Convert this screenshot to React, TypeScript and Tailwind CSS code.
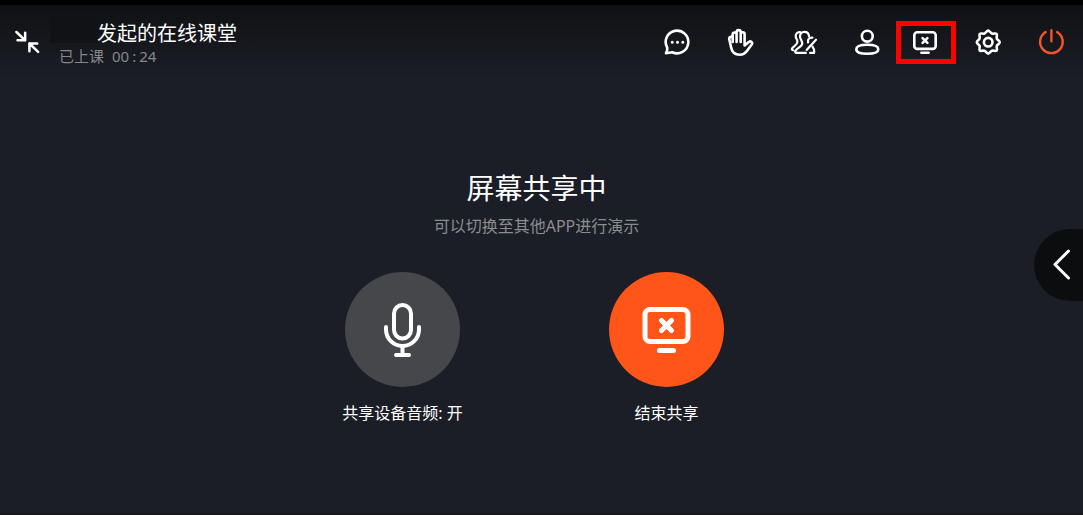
import type { ReactNode } from "react";

function Icon({ children, className = "size-7" }: { children: ReactNode; className?: string }) {
  return (
    <svg
      viewBox="0 0 28 28"
      fill="none"
      stroke="currentColor"
      strokeWidth={2.6}
      strokeLinecap="round"
      strokeLinejoin="round"
      className={className}
      aria-hidden="true"
    >
      {children}
    </svg>
  );
}

function ToolButton({ label, children }: { label: string; children: ReactNode }) {
  return (
    <button type="button" aria-label={label} className="block size-7">
      <Icon>{children}</Icon>
    </button>
  );
}

function Toolbar() {
  return (
    <nav className="flex items-center gap-[35px] pt-[23px]">
      <ToolButton label="聊天">
        <path d="M3.2 19.6A11.3 11.3 0 1 1 8.2 24.2L2 25.2Q3.6 22.6 3.2 19.600Z" />
        <path d="M8.2 14.2h.01M13.5 14.2h.01M18.8 14.2h.01" strokeWidth={3} />
      </ToolButton>
      <ToolButton label="举手">
        <path d="M5.7 14V6.4a1.9 1.9 0 0 1 3.9 0V14M9.6 6V4.2a2 2 0 0 1 4.1 0V14M13.7 6.2a1.9 1.9 0 0 1 3.9 0v11.2l4.2-3.4c2-1.5 4.2.5 2.9 2.5l-5 6.8c-1.8 2.4-3.8 3.4-6.9 3.4-5.3 0-8-2.8-8.7-7.4L2.2 11c-.2-2.4 3.3-3 3.5-.8" />
      </ToolButton>
      <ToolButton label="分组">
        <g strokeWidth={2.2}>
          <path d="M10.2 4.2C7 3.8 5.3 6.2 5.8 9c.3 1.7 1.5 2.6 1.6 4.4.1 3.3-3.2 4.5-5 6.5-.9 1-.5 2 .7 2.3" />
          <path d="M19 8.2c-.6-5.8-9-5.6-9 .2 0 2.7 2.2 4.2 2.2 7.2 0 3.3-4.7 4-6.7 7-.7 1.2-.2 2.3 1 2.3h9.3" />
          <path d="M22.4 9.7c-3.2-.4-5 1.8-4.3 4.8M26 11.7L16.6 22M22.6 18.7c.2 1.5 1.5 1.9 1.5 3.3v2.9h-4" />
        </g>
      </ToolButton>
      <ToolButton label="成员">
        <circle cx="14.3" cy="8.2" r="5.4" />
        <path d="M14.3 16.8c7.3 0 11 1.3 11 4.5s-3.7 4.5-11 4.5-11-1.3-11-4.5 3.7-4.5 11-4.5Z" />
      </ToolButton>
      <div className="relative -ml-[5px]">
        <ToolButton label="共享屏幕">
          <rect x="3.3" y="4.2" width="21.4" height="16.7" rx="3" />
          <path d="M11.6 10.1l4.8 4.8M16.4 10.1l-4.8 4.8M10.4 24.8h7.2" />
        </ToolButton>
        <span className="pointer-events-none absolute -top-[7px] -right-[17px] -bottom-2 -left-[15px] border-[5px] border-[#ff0000]" />
      </div>
      <ToolButton label="设置">
        <path d="M14.2 2.6c1.5 0 2.2 2.3 3.7 2.9 1.5.7 3.6-.7 4.7.4s-.4 3.2.2 4.7c.7 1.5 2.9 2.1 2.9 3.6s-2.2 2.2-2.9 3.7c-.6 1.5.9 3.6-.2 4.7s-3.2-.5-4.7.2c-1.5.6-2.2 2.8-3.7 2.8s-2.2-2.2-3.7-2.8c-1.5-.7-3.6.9-4.7-.2s.5-3.2-.2-4.7c-.6-1.5-2.8-2.2-2.8-3.7s2.2-2.1 2.8-3.6c.7-1.5-.9-3.6.2-4.7s3.2.3 4.7-.4c1.5-.6 2.2-2.9 3.7-2.9Z" />
        <circle cx="14.2" cy="14.2" r="4.3" />
      </ToolButton>
      <div className="text-[#f0562a]">
        <ToolButton label="下课">
          <path d="M8.6 4.1a11.3 11.3 0 1 0 11.6 0M14.4 2.2v11" strokeWidth={2.4} />
        </ToolButton>
      </div>
    </nav>
  );
}

function Header() {
  return (
    <header className="flex h-[75px] items-start justify-between bg-linear-to-b from-[#101114] to-[#1b1e26] pr-[18px]">
      <div className="flex items-start">
        <button type="button" aria-label="收起" className="mt-6 ml-[14px] block">
          <Icon className="size-[26px]">
            <path d="M2.6 3.2l9.4 9M12 4v8.2H3.8M26 24.6l-9.4-9M16.6 24v-8.4H25" strokeWidth={2.7} />
          </Icon>
        </button>
        <div className="ml-[10px] pt-3">
          <div className="flex h-[30px] items-start">
            <span className="h-[26px] w-[47px] bg-[#101215]" />
            <h1 className="pt-[2px] text-xl leading-[30px]">发起的在线课堂</h1>
          </div>
          <p className="ml-[9px] text-[15px] leading-[18px] text-[#85878b]">
            已上课<span className="ml-2">00</span>
            <span className="mx-[3px]">:</span>24
          </p>
        </div>
      </div>
      <Toolbar />
    </header>
  );
}

export default function App() {
  return (
    <div className="relative flex min-h-screen flex-col overflow-hidden border-t-[5px] border-b-2 border-t-black border-b-[#17191f] bg-[#1b1e26] font-['Noto_Sans','Noto_Sans_CJK_SC',sans-serif] text-white">
      <Header />
      <main className="flex flex-col items-center pt-[88px] pr-[14px] text-center">
        <h2 className="pl-1 text-[28px] leading-10">屏幕共享中</h2>
        <p className="mt-[6px] pl-1 text-base leading-6 text-[#8b8d91]">可以切换至其他APP进行演示</p>
        <div className="mt-[34px] flex justify-center gap-[104px]">
          <button type="button" className="flex w-40 flex-col items-center">
            <span className="flex size-[115px] items-center justify-center rounded-full bg-[#46474b]">
              <svg
                viewBox="0 0 40 56"
                fill="none"
                stroke="white"
                strokeWidth={4}
                strokeLinecap="round"
                className="h-14 w-10"
                aria-hidden="true"
              >
                <rect x="11" y="3" width="17" height="33.5" rx="8.5" />
                <path d="M3 25v2.5a16.5 16.5 0 0 0 33 0V25M19.5 44.5V53M13 53h13" />
              </svg>
            </span>
            <span className="mt-[14px] text-base leading-6">共享设备音频: 开</span>
          </button>
          <button type="button" className="flex w-40 flex-col items-center">
            <span className="flex size-[115px] items-center justify-center rounded-full bg-[#ff5519]">
              <svg
                viewBox="0 0 50 48"
                fill="none"
                stroke="white"
                strokeWidth={5}
                strokeLinecap="round"
                className="h-12 w-[50px]"
                aria-hidden="true"
              >
                <rect x="3" y="3.5" width="43" height="32" rx="5" />
                <path d="M19.5 14.5l10 10M29.5 14.5l-10 10M17.5 44.5h14" />
              </svg>
            </span>
            <span className="mt-[14px] text-base leading-6">结束共享</span>
          </button>
        </div>
      </main>
      <button
        type="button"
        aria-label="展开侧栏"
        className="absolute top-[224px] right-0 flex h-[72px] w-[49px] items-center rounded-l-full bg-[#0c0d0f] pl-[18px]"
      >
        <svg
          viewBox="0 0 20 32"
          fill="none"
          stroke="currentColor"
          strokeWidth={3}
          strokeLinecap="round"
          strokeLinejoin="round"
          className="h-8 w-5"
          aria-hidden="true"
        >
          <path d="M16.5 2L3 15.5 16.5 29" />
        </svg>
      </button>
    </div>
  );
}
